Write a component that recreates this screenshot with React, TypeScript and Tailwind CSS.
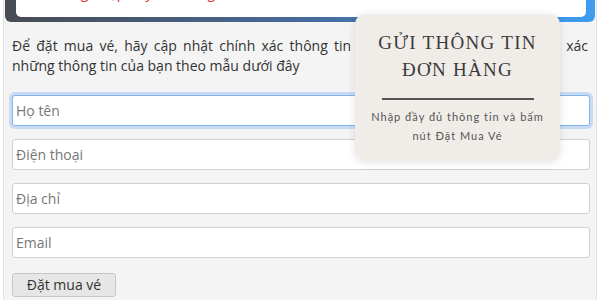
import React from "react";

const FIELDS = ["Họ tên", "Điện thoại", "Địa chỉ", "Email"];

const OrderForm = () => {
  return (
    <div className="relative h-[300px] w-[600px] overflow-hidden bg-white font-['Open_Sans',sans-serif]">
      <div className="mx-[3px] h-[300px] border-x border-[#e2e2e2] bg-[#f4f4f4]">
        {/* notice box, scrolled mostly out of view */}
        <div className="mx-px h-[22px] rounded-b-[6px] bg-gradient-to-r from-[#474b52] via-[#46699a] to-[#3d9df2] pb-[5px] pl-[11px] pr-[9px]">
          <div className="h-[17px] overflow-hidden rounded-b-[5px] bg-white">
            <p className="-mt-[15px] pl-[20px] text-[14px] leading-[16px] text-[#e0343a]">
              Vui lòng nhập đầy đủ thông tin
            </p>
          </div>
        </div>

        <div className="px-[8px] pt-[14px]">
          <p className="text-[14px] leading-[20px] text-[#333]">
            <span className="block text-justify [text-align-last:justify]">
              Để đặt mua vé, hãy cập nhật chính xác thông tin rõ ràng, đầy đủ và thật chính xác
            </span>
            <span className="block">những thông tin của bạn theo mẫu dưới đây</span>
          </p>

          <div className="mt-[19px] flex flex-col gap-[13px]">
            {FIELDS.map((label, i) => (
              <input
                key={label}
                placeholder={label}
                className={
                  i === 0
                    ? "h-[31px] w-[578px] rounded-[3px] border border-[#7fb6f0] bg-white px-[3px] text-[14px] text-[#333] shadow-[0_0_0_3px_rgba(120,170,240,0.35)] outline-none placeholder:text-[#777]"
                    : "h-[31px] w-[578px] rounded-[3px] border border-[#d0d0d0] bg-white px-[3px] text-[14px] text-[#333] outline-none placeholder:text-[#777]"
                }
              />
            ))}
          </div>

          <button className="mt-[15px] h-[24px] w-[104px] rounded-[3px] border border-[#c6c6c6] bg-[#e6e6e6] text-[14px] leading-[20px] text-[#333]">
            Đặt mua vé
          </button>
        </div>
      </div>

      {/* popup card */}
      <div className="absolute left-[355px] top-[14px] flex h-[146px] w-[205px] flex-col items-center rounded-[10px] bg-[#f0ede9] pt-[15px] shadow-[0_2px_8px_rgba(0,0,0,0.12)]">
        <h2 className="text-center font-['Liberation_Serif',serif] text-[19px] font-normal leading-[27px] tracking-[1.3px] text-[#3a3a3a]">
          GỬI THÔNG TIN
          <br />
          ĐƠN HÀNG
        </h2>
        <div className="mt-[15px] h-[1.5px] w-[152px] bg-[#555]" />
        <p className="mt-[7px] text-center font-['Lato',sans-serif] text-[11px] leading-[19px] tracking-[1px] text-[#555]">
          Nhập đầy đủ thông tin và bấm
          <br />
          nút Đặt Mua Vé
        </p>
      </div>
    </div>
  );
};

export default function App() {
  return <OrderForm />;
}
